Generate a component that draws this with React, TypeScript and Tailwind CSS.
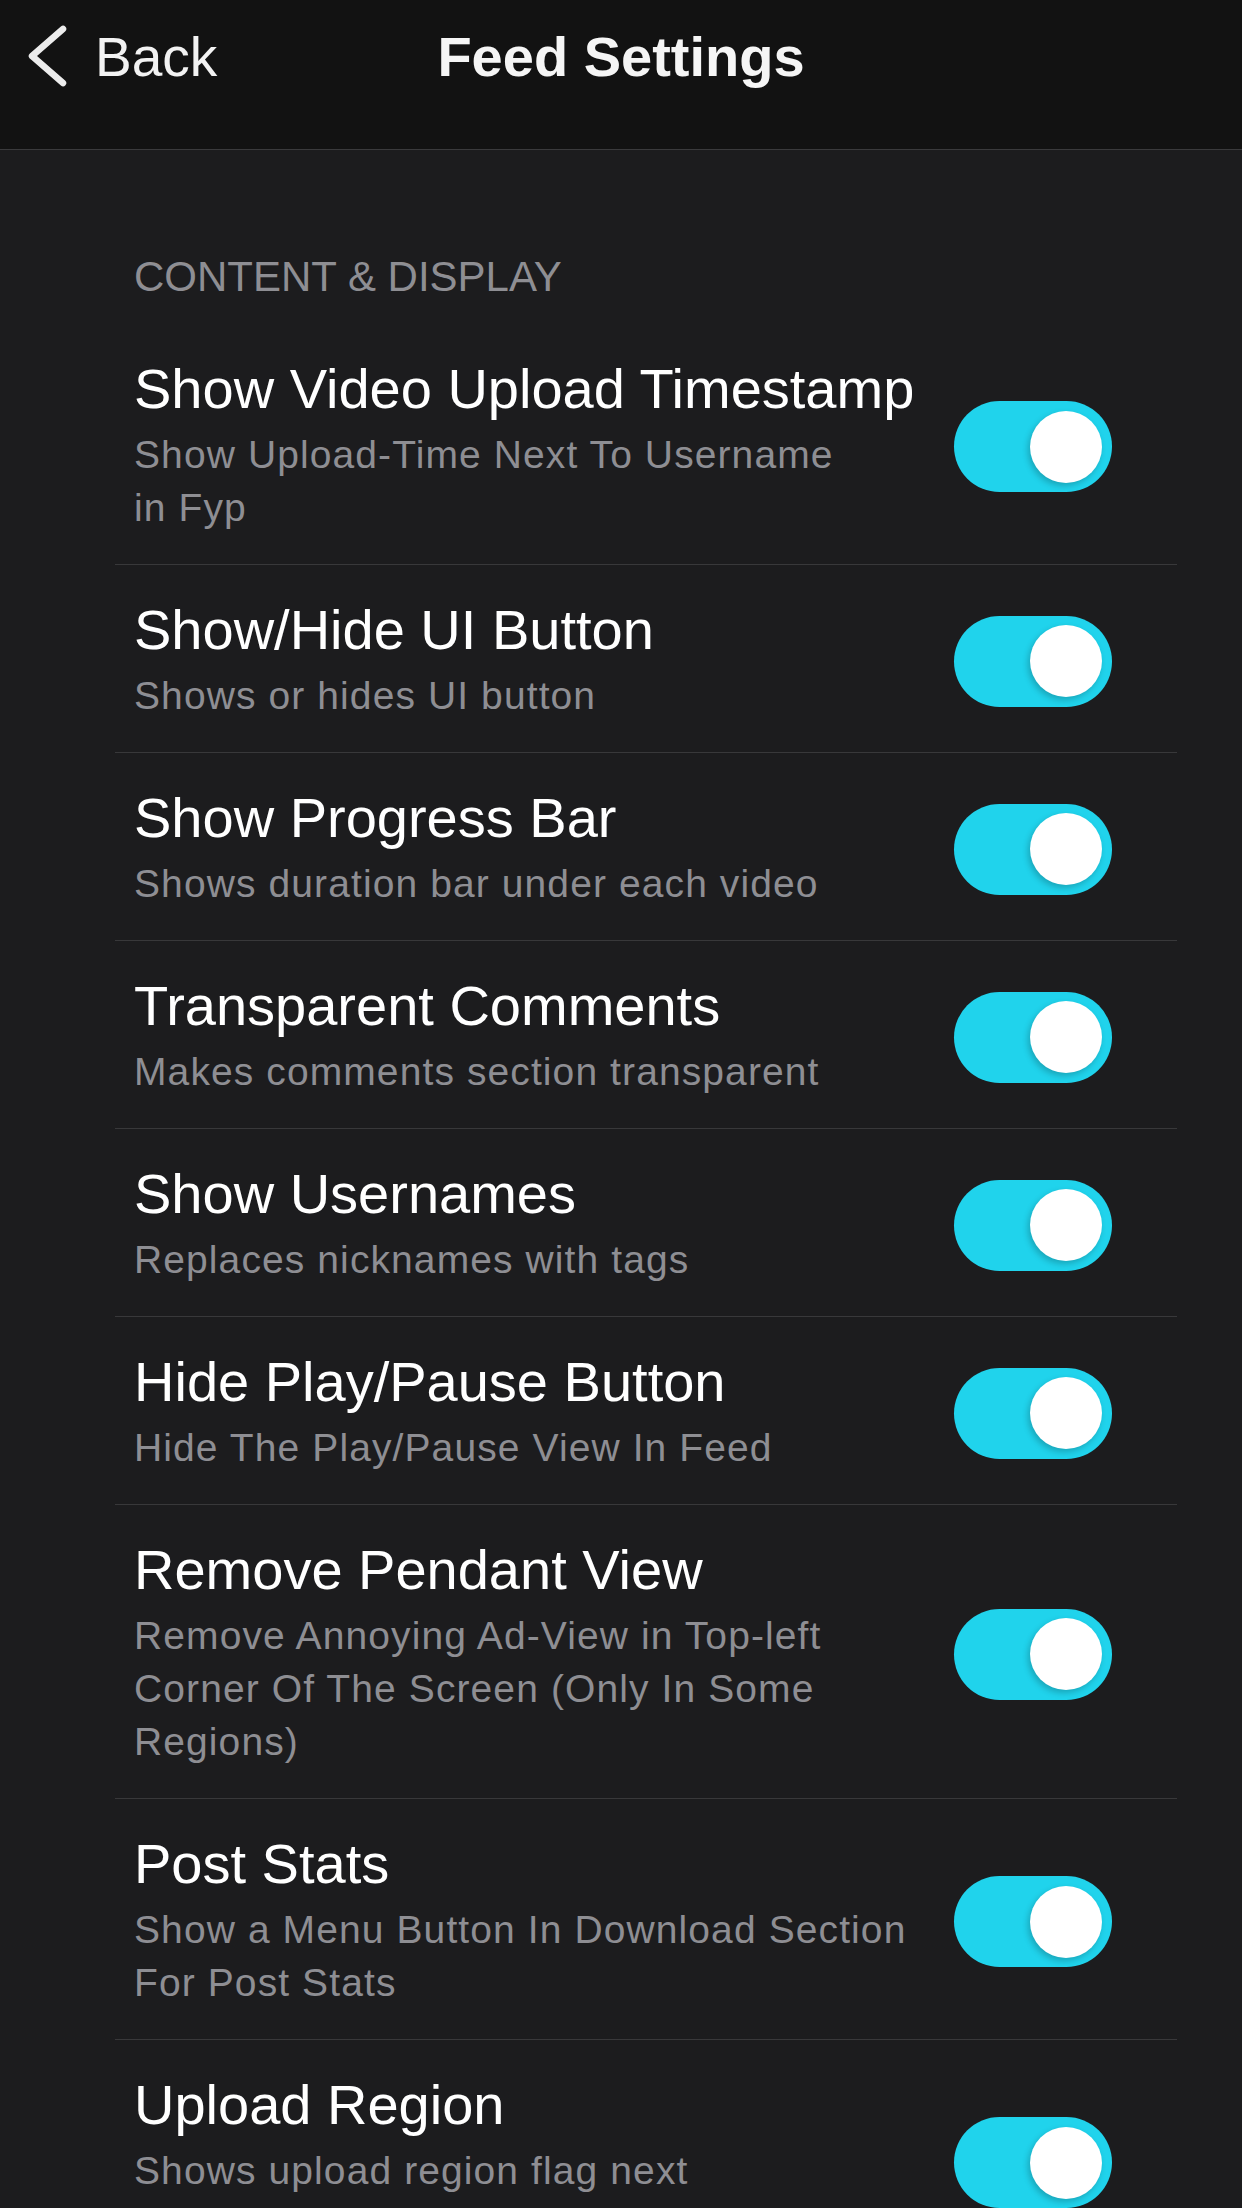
import React from "react";

type Row = { title: string; lines: string[] };

const rows: Row[] = [
  { title: "Show Video Upload Timestamp", lines: ["Show Upload-Time Next To Username", "in Fyp"] },
  { title: "Show/Hide UI Button", lines: ["Shows or hides UI button"] },
  { title: "Show Progress Bar", lines: ["Shows duration bar under each video"] },
  { title: "Transparent Comments", lines: ["Makes comments section transparent"] },
  { title: "Show Usernames", lines: ["Replaces nicknames with tags"] },
  { title: "Hide Play/Pause Button", lines: ["Hide The Play/Pause View In Feed"] },
  {
    title: "Remove Pendant View",
    lines: ["Remove Annoying Ad-View in Top-left", "Corner Of The Screen (Only In Some", "Regions)"],
  },
  { title: "Post Stats", lines: ["Show a Menu Button In Download Section", "For Post Stats"] },
  { title: "Upload Region", lines: ["Shows upload region flag next", "\u00a0"] },
];

function Toggle() {
  return (
    <div className="relative shrink-0 w-[158px] h-[91px] rounded-full bg-[#20d3ec] flex items-center justify-end pr-[10px]">
      <div className="w-[72px] h-[72px] rounded-full bg-white shadow-[-2px_3px_6px_rgba(0,0,0,0.22)]" />
    </div>
  );
}

export default function App() {
  return (
    <div className="min-h-screen w-[1242px] bg-[#1c1c1e] font-['Liberation_Sans',Arial,sans-serif]">
      <header className="h-[150px] bg-[#121212] border-b border-[#3a3a3c] grid grid-cols-[1fr_auto_1fr] items-start pt-[25px]">
        <div className="flex items-start">
          <svg width="44" height="64" viewBox="0 0 44 64" className="ml-[25px]" fill="none">
            <path d="M38 4 L7 31 L38 58" stroke="#ececec" strokeWidth="6.5" strokeLinecap="round" strokeLinejoin="round" />
          </svg>
          <span className="ml-[26px] text-[55px] leading-[64px] text-[#f2f2f2]">Back</span>
        </div>
        <h1 className="text-[56px] leading-[64px] font-bold text-[#f5f5f5]">Feed Settings</h1>
        <div />
      </header>

      <main className="ml-[115px] mr-[65px]">
        <div className="pl-[19px] pt-[102px] mb-[22px] text-[42px] leading-[50px] text-[#8e8e93]">
          CONTENT &amp; DISPLAY
        </div>
        {rows.map((r) => (
          <div key={r.title} className="flex items-center border-b border-[#38383a] pl-[19px] pr-[65px] pt-[35px] pb-[30px]">
            <div className="flex-1 min-w-0">
              <div className="text-[56px] leading-[60px] text-white whitespace-nowrap">{r.title}</div>
              <div className="mt-[9px] text-[39px] leading-[53px] tracking-[1.1px] text-[#8e8e93]">
                {r.lines.map((l, i) => (
                  <div key={i} className="whitespace-nowrap">
                    {l}
                  </div>
                ))}
              </div>
            </div>
            <Toggle />
          </div>
        ))}
      </main>
    </div>
  );
}
